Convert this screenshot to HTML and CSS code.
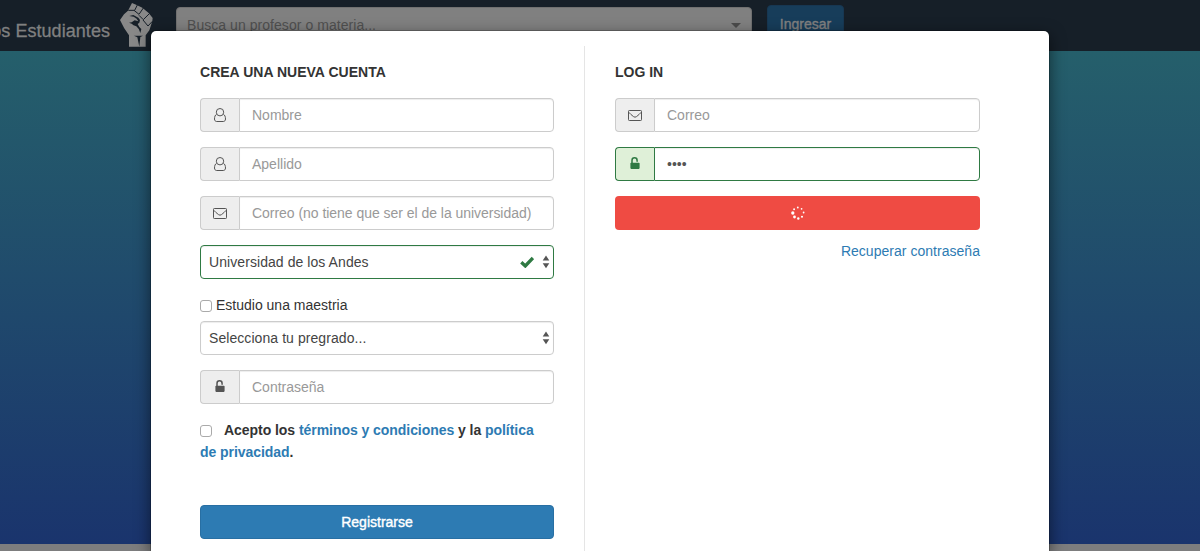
FILE: index.html
```html
<!DOCTYPE html>
<html lang="es">
<head>
<meta charset="utf-8">
<title>Los Estudiantes</title>
<link rel="stylesheet" href="styles.css">
</head>
<body>
<svg class="defs" aria-hidden="true">
  <symbol id="user" viewBox="0 0 12 14"><path d="M2.600 6.200C1.200 7 .5 8.800.5 11c0 1.500.9 2.500 2.200 2.500h6.600c1.300 0 2.200-1 2.200-2.500 0-2.200-.7-4-2.100-4.800M6 .5a3.700 3.700 0 1 1 0 7.400A3.700 3.700 0 0 1 6 .5z" fill="none" stroke="currentColor" stroke-width="1"/></symbol>
  <symbol id="mail" viewBox="0 0 14 11"><path d="M1.300.5h11.400q.8 0 .8.8v8.400q0 .8-.8.8H1.300q-.8 0-.8-.8V1.300q0-.8.8-.8zM.7 2.200C2 4 4 5.200 5.500 6.600q1.500 1.200 3 0C10 5.200 12 4 13.300 2.200" fill="none" stroke="currentColor"/></symbol>
  <symbol id="lock" viewBox="0 0 10 12"><path d="M2 6V3.400a2.500 2.500 0 0 1 5.100 0v.8" fill="none" stroke="currentColor" stroke-width="1.500" stroke-linecap="round"/><rect x=".4" y="5.700" width="9.200" height="6.200" rx=".8" fill="currentColor"/></symbol>
  <symbol id="arrows" viewBox="0 0 8 14"><path d="M4 .6 7.300 5.600H.7zM4 13.200.7 8.200h6.600z" fill="currentColor"/></symbol>
</svg>
<header class="navbar">
  <span class="brand">os Estudiantes</span>
  <svg class="fist" viewBox="0 0 150 150">
    <path fill="#888" d="M51 9 65 15 82 23 101 39 113 54 112 63 108 76 103 91 92 106V140H42V106Q27 87 15 60L27 43 39 32z"/>
    <g fill="none" stroke="#161f28" stroke-width="3">
      <path d="M67 15 59 31 40 31"/>
      <path d="M85 24 72 43 57 31"/>
      <path d="M103 41 85 59 72 46"/>
      <path d="M112 64 99 78 84 60"/>
    </g>
    <path fill="#161f28" d="m43 48 12-3 15 8 5 7-2 8-5 4q4 10 11 15l-3 12q-2-12-12-20-10-3-14-8l-8-3 8-1 9-6 11 3-5-8-9-6z"/>
    <path fill="#161f28" d="M57 107h27l-8 4-3 29-6-28z"/>
  </svg>
  <div class="search"><span>Busca un profesor o materia...</span><i class="caret"></i></div>
  <div class="enter">Ingresar</div>
</header>
<div class="hero"></div>
<div class="modal">
  <section class="signup">
    <h4 class="title">CREA UNA NUEVA CUENTA</h4>
    <div class="group"><span class="addon"><svg class="i-user"><use href="#user"/></svg></span><span class="field">Nombre</span></div>
    <div class="group"><span class="addon"><svg class="i-user"><use href="#user"/></svg></span><span class="field">Apellido</span></div>
    <div class="group"><span class="addon"><svg class="i-mail"><use href="#mail"/></svg></span><span class="field long">Correo (no tiene que ser el de la universidad)</span></div>
    <div class="select valid"><span>Universidad de los Andes</span>
      <svg class="check" viewBox="0 0 14 12"><path d="M1.300 6.300 5.300 10 12.900 2" fill="none" stroke="currentColor" stroke-width="3.300"/></svg>
      <svg class="arrows"><use href="#arrows"/></svg></div>
    <label class="study"><i class="box"></i><span>Estudio una maestria</span></label>
    <div class="select"><span>Selecciona tu pregrado...</span><svg class="arrows"><use href="#arrows"/></svg></div>
    <div class="group"><span class="addon"><svg class="i-lock"><use href="#lock"/></svg></span><span class="field">Contraseña</span></div>
    <p class="terms"><i class="box"></i><span>Acepto los <a>términos y condiciones</a> y la <a>política</a><br><a>de privacidad</a>.</span></p>
    <div class="register">Registrarse</div>
  </section>
  <section class="login">
    <h4>LOG IN</h4>
    <div class="group"><span class="addon"><svg class="i-mail"><use href="#mail"/></svg></span><span class="field">Correo</span></div>
    <div class="group ok"><span class="addon"><svg class="i-lock"><use href="#lock"/></svg></span><span class="field pass">••••</span></div>
    <div class="loading"><svg class="spinner" viewBox="0 0 14 14" fill="#fff">
      <circle cx="1.800" cy="7" r="1.650"/><circle cx="3.500" cy="11" r="1.400"/><circle cx="7.300" cy="12.500" r="1.200"/><circle cx="11" cy="10.700" r="1.050"/><circle cx="12.600" cy="6.500" r=".9"/><circle cx="10.600" cy="2.800" r=".85"/><circle cx="6.800" cy="1.500" r=".9"/><circle cx="3.100" cy="3.300" r=".95"/></svg></div>
    <a class="recover">Recuperar contraseña</a>
  </section>
</div>
</body>
</html>
```
FILE: styles.css
```css
* { box-sizing: border-box; }
body {
  margin: 0;
  height: 551px;
  overflow: hidden;
  background: #7d7d7e;
  color: #333;
  font: 14px/20px "Liberation Sans", Arial, sans-serif;
}
.defs { position: absolute; width: 0; height: 0; }
.navbar {
  height: 51px;
  display: flex;
  align-items: flex-start;
  background: #161f28;
  overflow: hidden;
}
.brand {
  width: 110px;
  padding-top: 19px;
  display: flex;
  justify-content: flex-end;
  white-space: nowrap;
  font-size: 18px;
  line-height: 25px;
  letter-spacing: .05px;
  color: #808080;
  -webkit-text-stroke: .3px #808080;
}
.fist { width: 50px; height: 50px; margin-left: 5px; flex: none; }
.search {
  width: 576px;
  height: 36px;
  margin: 7px 0 0 11px;
  padding: 0 10px;
  display: flex;
  align-items: center;
  justify-content: space-between;
  background: #808080;
  border-radius: 4px;
  border: 1px solid #707070;
  color: #505050;
  letter-spacing: .05px;
}
.caret { border: 5px solid transparent; border-top-color: #4b4b4b; border-bottom: 0; }
.enter {
  width: 77px;
  height: 38px;
  margin: 5px 0 0 15px;
  text-align: center;
  line-height: 36px;
  border-radius: 4px;
  background: #173d5a;
  border: 1px solid #173752;
  color: #808080;
  -webkit-text-stroke: .4px #808080;
}
.hero { height: 493px; background: linear-gradient(#255f6b, #1a346d); }
.modal {
  position: absolute;
  left: 150px;
  top: 30px;
  width: 900px;
  height: 521px;
  display: flex;
  padding: 15px 0 0 15px;
  background: #fff;
  background-clip: padding-box;
  border: 1px solid rgba(0,0,0,.2);
  border-bottom: 0;
  border-radius: 6px 6px 0 0;
  box-shadow: 0 5px 15px rgba(0,0,0,.5);
}
.signup { width: 419px; padding: 16px 30px 0 34px; border-right: 1px solid #e5e5e5; }
.login { width: 395px; padding: 16px 0 0 30px; display: flex; flex-direction: column; }
h4 { margin: 0 0 16px; font-size: 14px; line-height: 20px; }
.title { letter-spacing: .02px; }
.group { height: 34px; display: flex; margin-bottom: 15px; }
.addon {
  width: 39px;
  display: flex;
  align-items: center;
  justify-content: center;
  background: #eee;
  border: 1px solid #ccc;
  border-right: 0;
  border-radius: 4px 0 0 4px;
  color: #555;
}
.field {
  flex: 1;
  padding: 6px 12px;
  border: 1px solid #ccc;
  border-radius: 0 4px 4px 0;
  box-shadow: inset 0 1px 1px rgba(0,0,0,.075);
  color: #999;
  white-space: nowrap;
}
.long { letter-spacing: -.035px; }
.ok .addon { background: #dff0d8; border-color: #2f7a43; color: #2f7a43; }
.ok .field { border-color: #2f7a43; }
.ok .pass { color: #555; }
.i-user { width: 12px; height: 14px; }
.i-mail { width: 14px; height: 11px; }
.i-lock { width: 10px; height: 12px; margin-bottom: 2px; }
.select {
  height: 34px;
  display: flex;
  align-items: center;
  padding: 0 3px 0 8px;
  margin-bottom: 15px;
  border: 1px solid #ccc;
  border-radius: 4px;
  box-shadow: inset 0 1px 1px rgba(0,0,0,.075);
  color: #444;
  letter-spacing: .07px;
}
.select span { flex: 1; }
.valid { border-color: #2f7a43; }
.check { width: 14px; height: 12px; color: #2f7a43; margin-right: 8px; }
.arrows { width: 8px; height: 14px; color: #555; }
.study { display: flex; align-items: center; gap: 4px; margin: 16px 0 6px; height: 20px; }
.box { display: inline-block; width: 12px; height: 12px; border: 1px solid #aaa; border-radius: 3px; background: #fff; flex: none; }
.study .box { margin-top: 2px; }
.terms { margin: 0 0 42px; line-height: 22px; font-weight: bold; letter-spacing: -.05px; }
.terms .box { margin-right: 12px; vertical-align: -2px; }
a { color: #2d7bb3; }
.register, .loading { height: 34px; border-radius: 4px; }
.register {
  background: #2d7bb3;
  border: 1px solid #286fa3;
  color: #fff;
  text-align: center;
  line-height: 32px;
  -webkit-text-stroke: .4px #fff;
}
.loading { display: flex; align-items: center; justify-content: center; background: #ef4b43; }
.spinner { width: 14px; height: 14px; }
.recover { align-self: flex-end; margin-top: 11px; letter-spacing: .03px; }
```
